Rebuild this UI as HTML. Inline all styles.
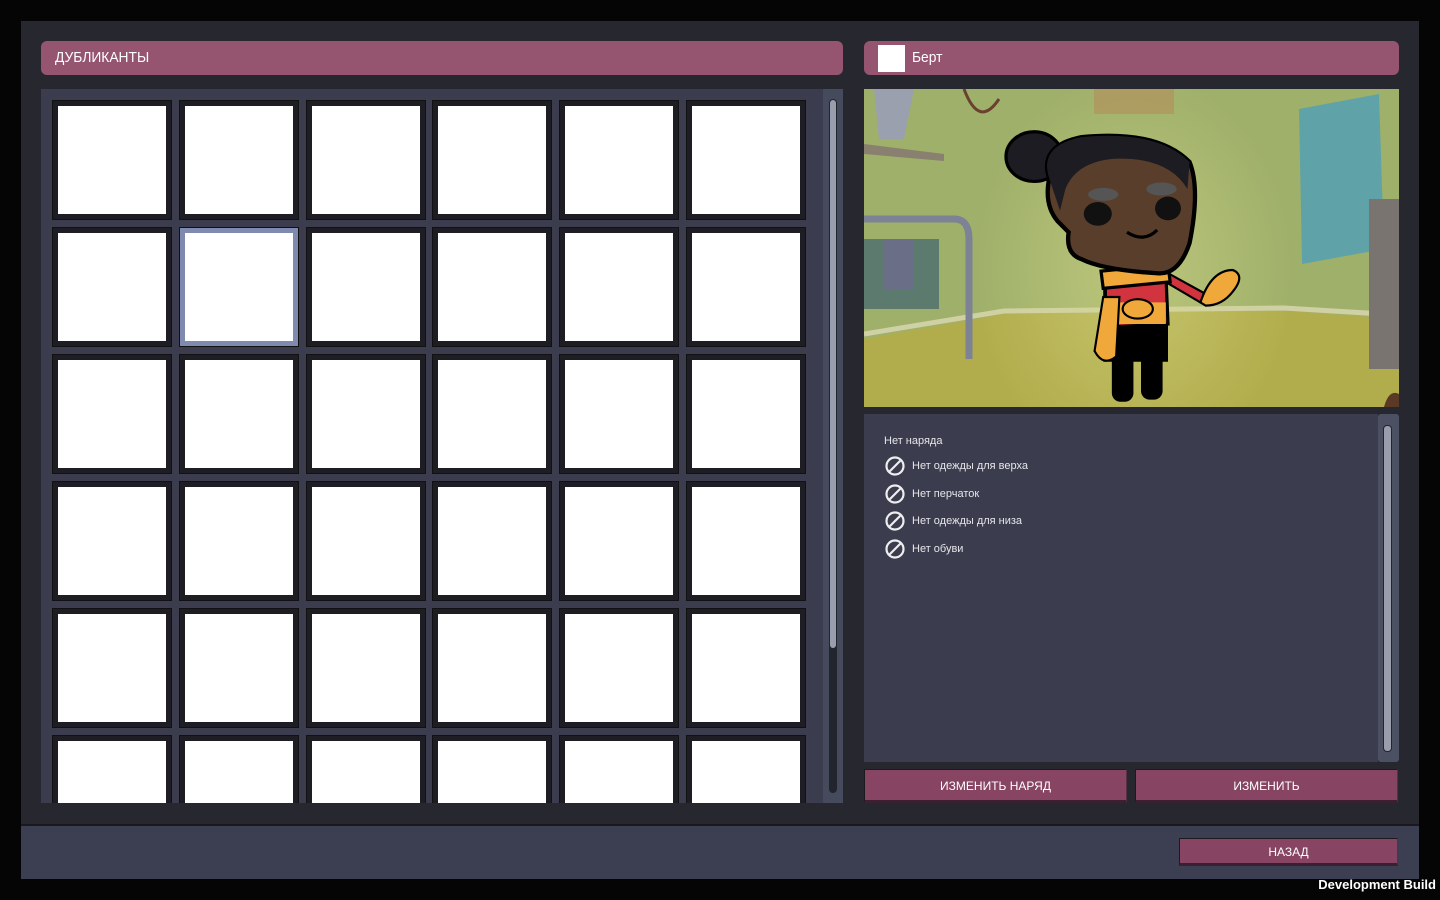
<!DOCTYPE html>
<html><head><meta charset="utf-8"><style>
*{margin:0;padding:0;box-sizing:border-box}
body{width:1440px;height:900px;background:#050506;position:relative;overflow:hidden;font-family:"Liberation Sans","DejaVu Sans",sans-serif;color:#fff}
.abs{position:absolute}
.hdr{background:#95546f;border-radius:6px;font-size:15px;line-height:34px;padding-left:14px}
.hdr span{display:inline-block;transform:scaleX(.92);transform-origin:left}
.cell{position:absolute;width:120px;height:120px;background:#1d1d23;border:1px solid #111;}
.cell i{position:absolute;left:5px;top:5px;right:5px;bottom:5px;background:#fff}
.cell.sel{background:#7f8aae}
.btn{position:absolute;background:#884563;border:1px solid #1a1a1f;border-right-color:#5a3048;border-bottom:3px solid #3a2030;text-align:center;font-size:12px;color:#fff}
.item{position:absolute;left:884px;font-size:11px;color:#e6e6ea;display:flex;align-items:center}
</style></head><body>
<div class="abs" style="left:21px;top:21px;width:1398px;height:803px;background:#27272f"></div>
<div class="abs" style="left:21px;top:824px;width:1398px;height:55px;background:#3c3f52;border-top:2px solid #18181d"></div>
<div class="abs hdr" style="left:41px;top:41px;width:802px;height:34px"><span>ДУБЛИКАНТЫ</span></div>
<div class="abs" style="left:41px;top:89px;width:782px;height:714px;background:#3b3c4e;overflow:hidden" id="g"></div>
<div class="abs" style="left:823px;top:89px;width:20px;height:714px;background:#454a5c"></div>
<div class="abs" style="left:829px;top:99px;width:8px;height:694px;background:#22242e;border-radius:4px"></div>
<div class="abs" style="left:830px;top:100px;width:6px;height:548px;background:#9a9eac;border-radius:3px"></div>
<div class="abs hdr" style="left:864px;top:41px;width:535px;height:34px;padding-left:48px"><span>Берт</span></div>
<div class="abs" style="left:878px;top:45px;width:27px;height:27px;background:#fff"></div>
<svg class="abs" style="left:864px;top:89px" width="535" height="318" viewBox="0 0 535 318">
<defs><radialGradient id="lt" cx="0.5" cy="0.5" r="0.5"><stop offset="0" stop-color="#d6d98a" stop-opacity=".55"/><stop offset="1" stop-color="#d6d98a" stop-opacity="0"/></radialGradient></defs>
<rect width="535" height="318" fill="#9fb06a"/>
<path d="M0 250 L140 225 L420 222 L535 230 L535 318 L0 318Z" fill="#b2ad4c"/>
<path d="M0 245 L140 222 L420 219 L535 226" stroke="#cfd0a4" stroke-width="5" fill="none"/>
<ellipse cx="270" cy="180" rx="160" ry="200" fill="url(#lt)"/>
<path d="M0 55 L80 65 L80 72 L0 65Z" fill="#8a8070"/><path d="M10 0 L50 0 L40 50 L15 50Z" fill="#9aa0ae"/>
<path d="M0 130 L90 130 Q105 130 105 150 L105 270" stroke="#7d8294" stroke-width="7" fill="none"/>
<rect x="0" y="150" width="75" height="70" fill="#5c7a6e"/><rect x="20" y="150" width="30" height="50" fill="#6a6e86"/>
<path d="M435 20 L515 5 L520 160 L438 175Z" fill="#5fa3a8"/>
<rect x="505" y="110" width="30" height="170" fill="#7a7470"/>
<rect x="230" y="0" width="80" height="25" fill="#b0935c" opacity=".7"/>
<path d="M100 0 Q115 40 135 10" stroke="#6a4030" stroke-width="3" fill="none"/>
<path d="M520 318 Q525 300 535 305 L535 318Z" fill="#5a3a24"/>
<g transform="translate(-20,-8) scale(1.08)">
<rect x="275" y="225" width="20" height="70" rx="8" fill="#000"/><rect x="248" y="225" width="20" height="72" rx="8" fill="#000"/>
<path d="M240 180 L300 178 L300 260 L240 260Z" fill="#000"/>
<path d="M242 180 L298 178 L300 225 L242 228Z" fill="#d1343f" stroke="#000" stroke-width="3"/>
<rect x="242" y="205" width="56" height="20" fill="#f0a83a"/><ellipse cx="272" cy="211" rx="14" ry="9" fill="#f0a83a" stroke="#000" stroke-width="2"/>
<path d="M296 185 L330 205 L340 200 L300 178Z" fill="#d1343f" stroke="#000" stroke-width="2"/>
<path d="M330 205 Q340 175 360 175 Q372 180 360 195 Q350 208 335 208Z" fill="#f0a83a" stroke="#000" stroke-width="2"/>
<path d="M240 200 L232 250 Q240 265 252 255 L255 200Z" fill="#f0a83a" stroke="#000" stroke-width="2"/>
<path d="M238 176 L300 170 L302 186 L240 192Z" fill="#f0a83a" stroke="#000" stroke-width="3"/>
<ellipse cx="176" cy="70" rx="26" ry="23" fill="#1c1c22" stroke="#000" stroke-width="3"/>
<path d="M190 90 Q180 60 220 52 Q290 45 320 75 Q330 100 320 150 Q310 180 290 178 Q240 175 220 165 Q205 160 208 140 L198 130 Q185 115 190 90Z" fill="#5a3e2c" stroke="#000" stroke-width="4"/>
<path d="M190 90 Q180 60 220 52 Q290 45 320 75 L318 100 Q300 70 250 72 Q215 75 205 100 L200 120Z" fill="#1c1c22"/>
<ellipse cx="235" cy="123" rx="13" ry="11" fill="#111"/><ellipse cx="300" cy="118" rx="12" ry="11" fill="#111"/>
<ellipse cx="240" cy="105" rx="14" ry="6" fill="#555"/><ellipse cx="294" cy="100" rx="14" ry="6" fill="#555"/>
<path d="M262 140 Q278 150 290 138" stroke="#000" stroke-width="3" fill="none"/>
</g>
</svg>
<div class="abs" style="left:864px;top:414px;width:514px;height:348px;background:#3b3c4e"></div>
<div class="abs" style="left:1378px;top:414px;width:21px;height:348px;background:#4b5063;border-radius:3px"></div>
<div class="abs" style="left:1383px;top:425px;width:9px;height:327px;background:#22242e;border-radius:4px"></div>
<div class="abs" style="left:1384px;top:426px;width:7px;height:325px;background:#9a9eac;border-radius:3px"></div>
<div class="item" style="top:435px">Нет наряда</div>
<div id="it"></div>
<div class="btn" style="left:864px;top:769px;width:263px;height:34px;line-height:32px">ИЗМЕНИТЬ НАРЯД</div>
<div class="btn" style="left:1135px;top:769px;width:263px;height:34px;line-height:32px">ИЗМЕНИТЬ</div>
<div class="btn" style="left:1179px;top:838px;width:219px;height:28px;line-height:26px">НАЗАД</div>
<div class="abs" style="right:4px;top:877px;font-size:13px;font-weight:bold">Development Build</div>
<script>
var g=document.getElementById('g'),h='';
var xs=[11,138,265,391,518,645],ys=[11,138,265,392,519,646];
for(var r=0;r<6;r++)for(var c=0;c<6;c++)h+='<div class="cell'+(r==1&&c==1?' sel':'')+'" style="left:'+xs[c]+'px;top:'+ys[r]+'px"><i></i></div>';
g.innerHTML=h;
var t=['Нет одежды для верха','Нет перчаток','Нет одежды для низа','Нет обуви'],s='';
t.forEach(function(x,i){s+='<div class="item" style="top:'+(455+i*27.5)+'px"><svg width="22" height="22" viewBox="0 0 22 22" style="margin-right:6px"><circle cx="11" cy="11" r="8.5" fill="none" stroke="#eee" stroke-width="2.2"/><line x1="5" y1="17" x2="17" y2="5" stroke="#eee" stroke-width="2.2"/></svg>'+x+'</div>'});
document.getElementById('it').innerHTML=s;
</script>
</body></html>
